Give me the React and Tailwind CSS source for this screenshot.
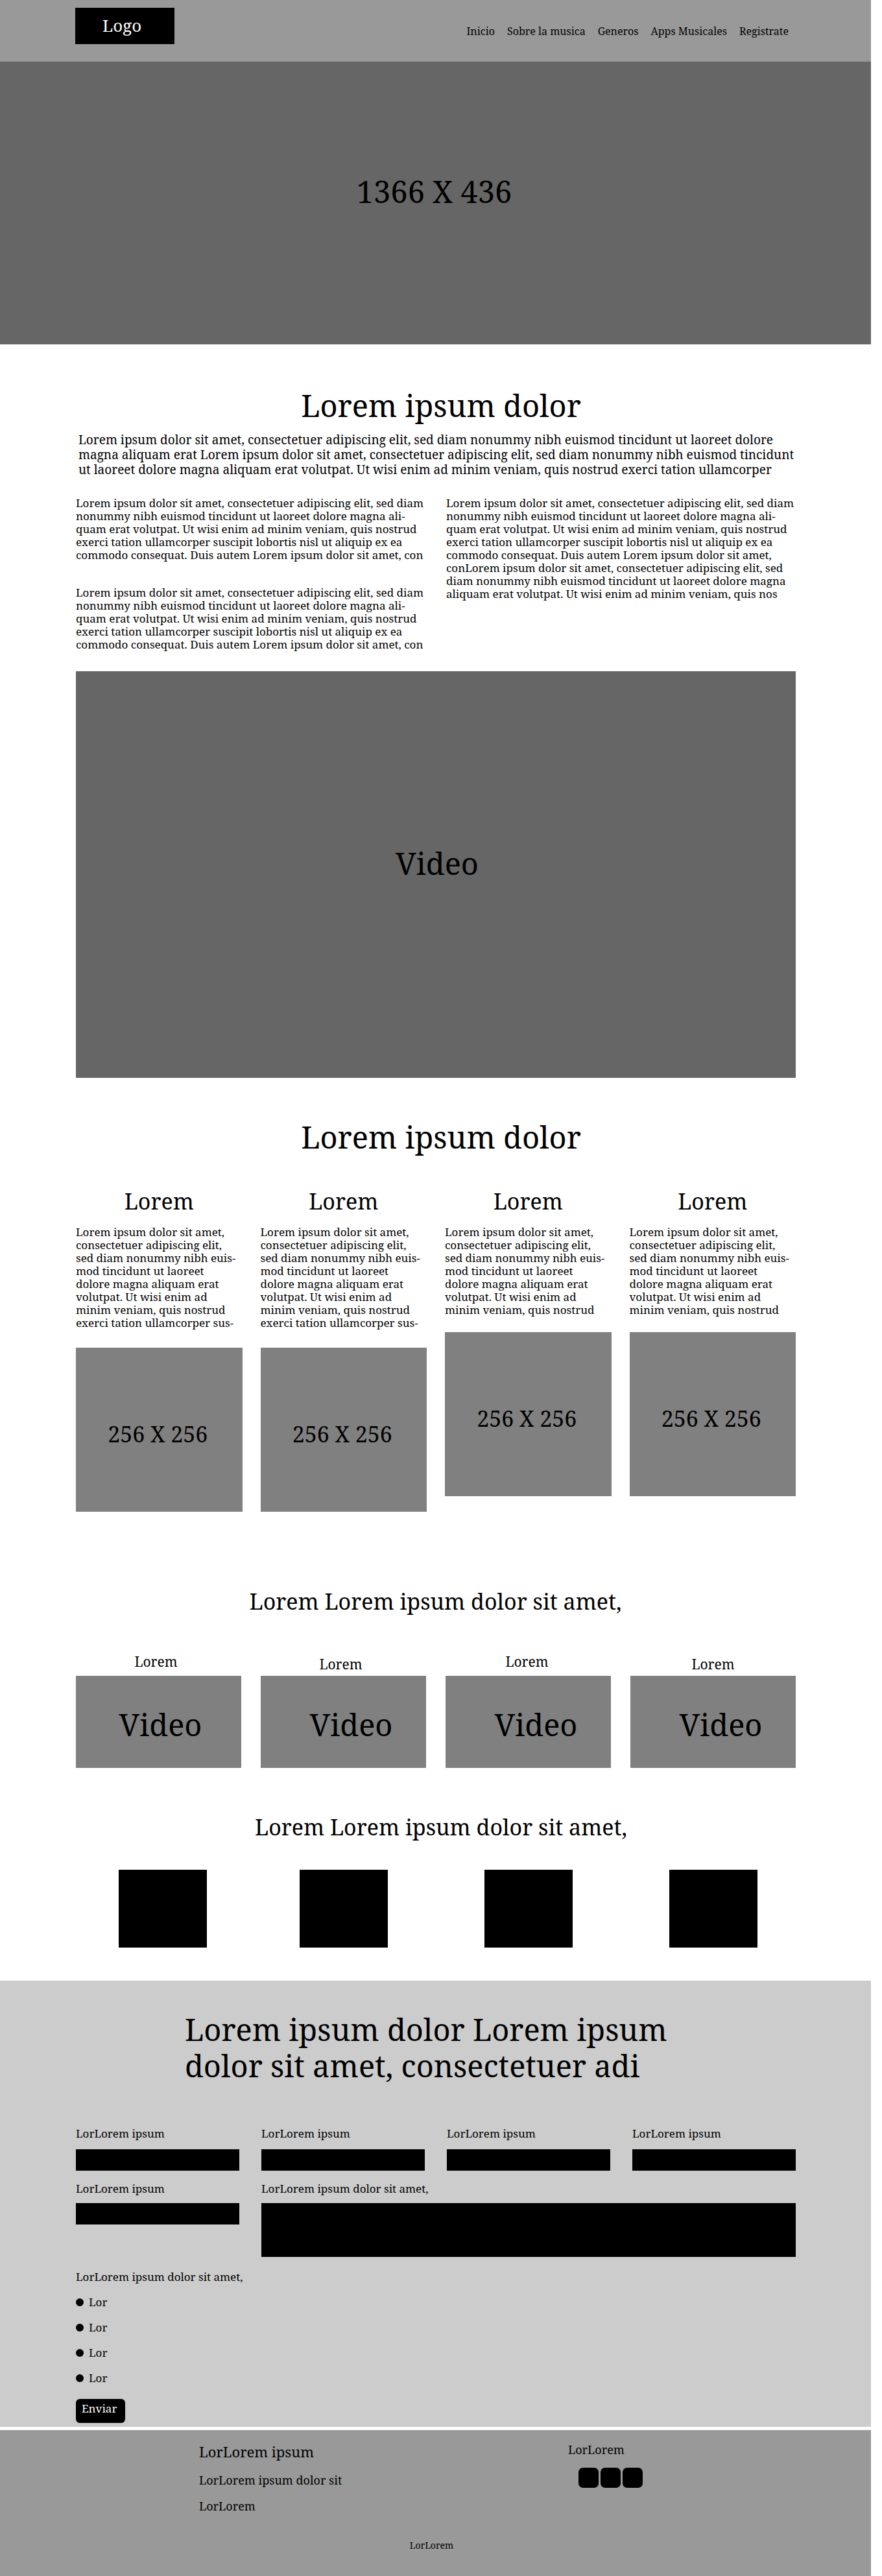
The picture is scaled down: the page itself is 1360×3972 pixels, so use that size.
import { Fragment } from "react";

const NAV = ["Inicio", "Sobre la musica", "Generos", "Apps Musicales", "Registrate"];

const LEAD = [
  "Lorem ipsum dolor sit amet, consectetuer adipiscing elit, sed diam nonummy nibh euismod tincidunt ut laoreet dolore",
  "magna aliquam erat Lorem ipsum dolor sit amet, consectetuer adipiscing elit, sed diam nonummy nibh euismod tincidunt",
  "ut laoreet dolore magna aliquam erat volutpat. Ut wisi enim ad minim veniam, quis nostrud exerci tation ullamcorper",
];

const SHORT = [
  "Lorem ipsum dolor sit amet, consectetuer adipiscing elit, sed diam",
  "nonummy nibh euismod tincidunt ut laoreet dolore magna ali-",
  "quam erat volutpat. Ut wisi enim ad minim veniam, quis nostrud",
  "exerci tation ullamcorper suscipit lobortis nisl ut aliquip ex ea",
  "commodo consequat. Duis autem Lorem ipsum dolor sit amet, con",
];

const LONG = [
  ...SHORT.slice(0, 4),
  "commodo consequat. Duis autem Lorem ipsum dolor sit amet,",
  "conLorem ipsum dolor sit amet, consectetuer adipiscing elit, sed",
  "diam nonummy nibh euismod tincidunt ut laoreet dolore magna",
  "aliquam erat volutpat. Ut wisi enim ad minim veniam, quis nos",
];

const CARD_SHORT = [
  "Lorem ipsum dolor sit amet,",
  "consectetuer adipiscing elit,",
  "sed diam nonummy nibh euis-",
  "mod tincidunt ut laoreet",
  "dolore magna aliquam erat",
  "volutpat. Ut wisi enim ad",
  "minim veniam, quis nostrud",
];
const CARD_LONG = [...CARD_SHORT, "exerci tation ullamcorper sus-"];

const CARDS = [
  { lines: CARD_LONG, gap: "mt-[28px]" },
  { lines: CARD_LONG, gap: "mt-[28px]" },
  { lines: CARD_SHORT, gap: "mt-[24px]" },
  { lines: CARD_SHORT, gap: "mt-[24px]" },
];

const VIDEOS = [
  { label: "pr-2", text: "pl-1.5" },
  { label: "pt-1 pr-2", text: "pl-6" },
  { label: "pr-1", text: "pl-6" },
  { label: "pt-1", text: "pl-6" },
];

function Lines({ lines, className }) {
  return (
    <p className={className}>
      {lines.map((line, i) => (
        <Fragment key={i}>
          {i > 0 && <br />}
          {line}
        </Fragment>
      ))}
    </p>
  );
}

function Field({ id, label, gap }) {
  return (
    <div>
      <label htmlFor={id} className="block">
        {label}
      </label>
      <input id={id} type="text" className={`block h-[33px] w-full bg-black px-2 text-white ${gap}`} />
    </div>
  );
}

export default function App() {
  return (
    <div className="bg-white font-['Noto_Serif',serif] text-[17px] leading-[20px] text-black">
      <header className="mr-[17px] flex h-[95px] items-center justify-between bg-[#999999] pr-[127px] pl-[116px]">
        <a
          href="#inicio"
          className="mb-[15px] flex h-[56px] w-[153px] items-center bg-black pb-[2px] pl-[42px] text-[26px] leading-[32px] text-white"
        >
          Logo
        </a>
        <nav className="flex gap-[19px] text-[16px]">
          {NAV.map((item) => (
            <a key={item} href="#inicio">
              {item}
            </a>
          ))}
        </nav>
      </header>

      <section
        id="inicio"
        className="mr-[17px] flex h-[436px] items-center justify-center bg-[#666666] pr-1 pb-9 text-[47px] leading-[56px]"
      >
        1366 X 436
      </section>

      <main>
        <section>
          <h1 className="mt-[66px] text-center text-[47px] leading-[56px]">Lorem ipsum dolor</h1>
          <div className="pr-[133px] pl-[117px]">
            <Lines lines={LEAD} className="mt-[14px] pl-1 text-[19px] leading-[23px] whitespace-nowrap" />
            <div className="mt-[30px] grid grid-cols-2 gap-8">
              <div className="flex flex-col gap-[38px]">
                <Lines lines={SHORT} />
                <Lines lines={SHORT} />
              </div>
              <Lines lines={LONG} />
            </div>
            <div className="mt-[31px] flex h-[627px] items-center justify-center bg-[#666666] pb-9 pl-1 text-[47px] leading-[56px]">
              Video
            </div>
          </div>
        </section>

        <section>
          <h2 className="mt-[63px] text-center text-[47px] leading-[56px]">Lorem ipsum dolor</h2>
          <div className="mt-[51px] grid grid-cols-4 gap-7 pr-[133px] pl-[117px]">
            {CARDS.map((card, i) => (
              <article key={i}>
                <h3 className="text-center text-[34px] leading-[40px]">Lorem</h3>
                <Lines lines={card.lines} className="mt-[18px]" />
                <div
                  className={`flex h-[253px] items-center justify-center bg-[#808080] pt-[13px] pr-1 text-[34px] leading-[40px] ${card.gap}`}
                >
                  256 X 256
                </div>
              </article>
            ))}
          </div>
        </section>

        <section>
          <h2 className="mt-[118px] mr-[17px] text-center text-[34px] leading-[40px]">
            Lorem Lorem ipsum dolor sit amet,
          </h2>
          <div className="mt-[60px] grid grid-cols-4 gap-[30px] pr-[133px] pl-[117px]">
            {VIDEOS.map((video, i) => (
              <article key={i}>
                <h3 className={`h-[35px] text-center text-[21px] leading-[26px] ${video.label}`}>Lorem</h3>
                <div
                  className={`flex h-[142px] items-center justify-center bg-[#808080] pt-2 text-[47px] leading-[56px] ${video.text}`}
                >
                  Video
                </div>
              </article>
            ))}
          </div>
        </section>

        <section>
          <h2 className="mt-[71px] text-center text-[34px] leading-[40px]">Lorem Lorem ipsum dolor sit amet,</h2>
          <div className="mt-[46px] grid grid-cols-4 justify-items-center gap-[30px] pr-[133px] pl-[117px]">
            <div className="ml-3 h-[120px] w-[136px] bg-black" />
            <div className="h-[120px] w-[136px] bg-black" />
            <div className="h-[120px] w-[136px] bg-black" />
            <div className="h-[120px] w-[136px] bg-black" />
          </div>
        </section>
      </main>

      <section className="mt-[51px] mr-[17px] bg-[#cccccc] pt-[47px] pr-[116px] pb-[6px] pl-[117px]">
        <h2 className="pl-[168px] text-[47px] leading-[56px]">
          Lorem ipsum dolor Lorem ipsum
          <br />
          dolor sit amet, consectetuer adi
        </h2>
        <form className="mt-[67px]" onSubmit={(e) => e.preventDefault()}>
          <div className="grid grid-cols-4 gap-x-[34px] gap-y-[18px]">
            <Field id="campo-1" label="LorLorem ipsum" gap="mt-[14px]" />
            <Field id="campo-2" label="LorLorem ipsum" gap="mt-[14px]" />
            <Field id="campo-3" label="LorLorem ipsum" gap="mt-[14px]" />
            <Field id="campo-4" label="LorLorem ipsum" gap="mt-[14px]" />
            <Field id="campo-5" label="LorLorem ipsum" gap="mt-3" />
            <div className="col-span-3">
              <label htmlFor="mensaje" className="block">
                LorLorem ipsum dolor sit amet,
              </label>
              <textarea id="mensaje" className="mt-3 block h-[83px] w-full resize-none bg-black p-2 text-white" />
            </div>
          </div>
          <fieldset className="mt-[21px]">
            <legend>LorLorem ipsum dolor sit amet,</legend>
            <div className="mt-[19px] flex flex-col items-start gap-[19px]">
              {[1, 2, 3, 4].map((n) => (
                <label key={n} className="flex items-center gap-2">
                  <input
                    type="radio"
                    name="opcion"
                    value={n}
                    className="size-3 appearance-none rounded-full bg-black"
                  />
                  Lor
                </label>
              ))}
            </div>
          </fieldset>
          <button
            type="submit"
            className="mt-[22px] flex h-[37px] w-[76px] items-start rounded-md bg-black pt-[5px] pl-[9px] text-white"
          >
            Enviar
          </button>
        </form>
      </section>

      <footer className="mt-[5px] mr-[17px] bg-[#999999] pt-[19px] pb-[38px]">
        <div className="grid grid-cols-[569fr_467fr] pl-[307px] text-[18px] leading-[22px]">
          <div>
            <h2 className="mt-px text-[22px] leading-[26px]">LorLorem ipsum</h2>
            <p className="mt-5">LorLorem ipsum dolor sit</p>
            <p className="mt-[18px]">LorLorem</p>
          </div>
          <div>
            <p>LorLorem</p>
            <div className="mt-[17px] ml-4 flex gap-[3px]">
              <a href="#inicio" aria-label="Facebook" className="size-[31px] rounded-[7px] bg-black" />
              <a href="#inicio" aria-label="Twitter" className="size-[31px] rounded-[7px] bg-black" />
              <a href="#inicio" aria-label="Instagram" className="size-[31px] rounded-[7px] bg-black" />
            </div>
          </div>
        </div>
        <p className="mt-[41px] pr-3 text-center text-[14px] leading-[18px]">LorLorem</p>
      </footer>
    </div>
  );
}
